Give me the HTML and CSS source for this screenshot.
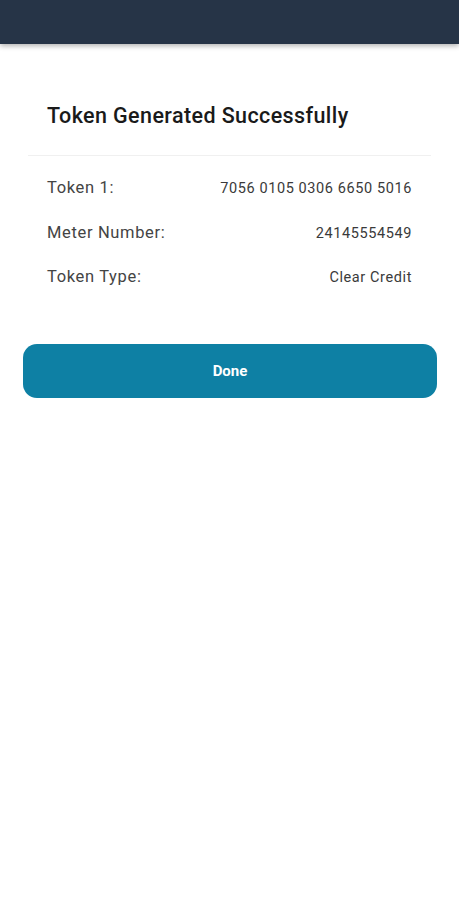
FILE: index.html
```html
<!DOCTYPE html>
<html lang="en">
<head>
    <meta charset="UTF-8">
    <meta name="viewport" content="width=device-width, initial-scale=1.0">
    <title>Token Generated</title>
    <link rel="stylesheet" href="styles.css">
</head>
<body>
    <header class="top-bar"></header>

    <!-- Riepilogo del token -->
    <div class="summary">
        <h1 class="summary-title">Token Generated Successfully</h1>
        <div class="summary-rows">
            <div class="row">
                <span class="label">Token 1:</span>
                <span class="value">7056 0105 0306 6650 5016</span>
            </div>
            <div class="row">
                <span class="label">Meter Number:</span>
                <span class="value">24145554549</span>
            </div>
            <div class="row">
                <span class="label">Token Type:</span>
                <span class="value">Clear Credit</span>
            </div>
        </div>
    </div>

    <div class="actions">
        <button type="button" class="done-btn">Done</button>
    </div>
</body>
</html>
```

FILE: styles.css
```css
body {
    margin: 0;
    font-family: Roboto, "Noto Sans", Arial, sans-serif;
    background: #ffffff;
    color: #1f1f1f;
}
.top-bar {
    height: 44px;
    background: #263447;
    box-shadow: 0 2px 5px rgba(0, 0, 0, 0.3);
}
.summary {
    margin: 0 28px;
    padding-top: 58px;
}
.summary-title {
    margin: 0;
    padding: 0 0 25px 19px;
    font-size: 21.5px;
    font-weight: 500;
    letter-spacing: 0.4px;
    color: #1a1a1a;
    border-bottom: 1px solid #f0f0f0;
    line-height: 28px;
}
.summary-rows {
    padding: 22px 19px 0 19px;
}
.row {
    display: flex;
    justify-content: space-between;
    align-items: baseline;
    height: 44.5px;
}
.label {
    font-size: 16.5px;
    letter-spacing: 0.65px;
    color: #444444;
}
.value {
    font-size: 14.5px;
    letter-spacing: 0.6px;
    color: #3a3a3a;
}
.actions {
    padding: 32px 22px 0 23px;
}
.done-btn {
    width: 100%;
    height: 54px;
    border: none;
    border-radius: 14px;
    background: #0e80a4;
    color: #ffffff;
    font-family: Roboto, Arial, sans-serif;
    font-size: 15px;
    font-weight: 700;
    cursor: pointer;
}
```
